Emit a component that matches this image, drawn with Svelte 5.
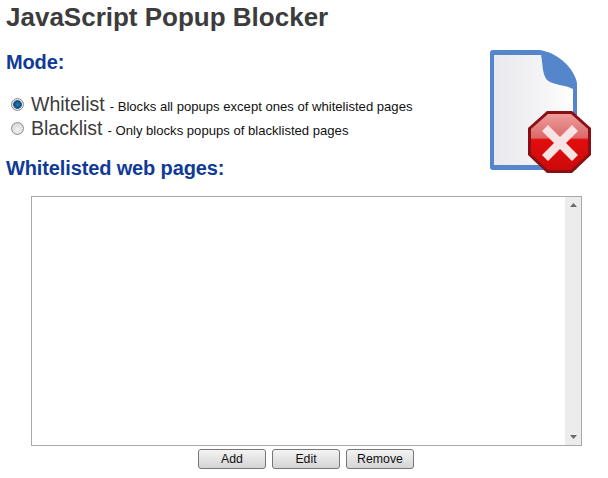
<script>
  let mode = $state("whitelist");
</script>

<div class="page">
  <h1>JavaScript Popup Blocker</h1>

  <svg class="logo" width="106" height="128" viewBox="0 0 106 128">
    <defs>
      <linearGradient id="sheet" x1="0" x2="1" y1="0" y2="0">
        <stop offset="0" stop-color="#e9e9ee" />
        <stop offset="0.6" stop-color="#f4f4f6" />
        <stop offset="1" stop-color="#ffffff" />
      </linearGradient>
      <linearGradient id="stop-red" x1="0" x2="0" y1="0" y2="1">
        <stop offset="0" stop-color="#ee9c9c" />
        <stop offset="0.42" stop-color="#dc6a6a" />
        <stop offset="0.46" stop-color="#e20d0d" />
        <stop offset="1" stop-color="#cc0a0a" />
      </linearGradient>
    </defs>
    <path d="M3 0H50C68 3 84 18 87 33V117Q87 120 84 120H3Q0 120 0 117V3Q0 0 3 0Z" fill="#5585cb" />
    <path d="M4 5H51C53 14 52 24 57 30C63 35 76 35 83 39V115H4Z" fill="url(#sheet)" />
    <path d="M57 61H82L101 78V105L82 123H57L38 105V78Z" fill="#8a0f14" />
    <path d="M58 64H81L98 79V104L81 120H58L41 104V79Z" fill="url(#stop-red)" />
    <path d="M58 75L70 87L82 75L88 81L76 93L88 105L82 111L70 99L58 111L52 105L64 93L52 81Z" fill="#f8e4e4" />
  </svg>

  <h2>Mode:</h2>

  <div class="modes">
    <label class="mode">
      <input type="radio" name="mode" value="whitelist" bind:group={mode} />
      <span class="name">Whitelist</span>
      <span class="hint">- Blocks all popups except ones of whitelisted pages</span>
    </label>
    <label class="mode">
      <input type="radio" name="mode" value="blacklist" bind:group={mode} />
      <span class="name">Blacklist</span>
      <span class="hint">- Only blocks popups of blacklisted pages</span>
    </label>
  </div>

  <h2 class="pages">Whitelisted web pages:</h2>

  <div class="list">
    <div class="scrollbar">
      <svg width="7" height="4" viewBox="0 0 7 4"><path d="M3.5 0L7 4H0Z" fill="#6a6a6a" /></svg>
      <svg width="7" height="4" viewBox="0 0 7 4"><path d="M0 0H7L3.5 4Z" fill="#6a6a6a" /></svg>
    </div>
  </div>

  <div class="buttons">
    <button>Add</button>
    <button>Edit</button>
    <button>Remove</button>
  </div>
</div>

<style>
  :global(body) {
    background: white;
    font-family: "Liberation Sans", Arial, sans-serif;
  }

  .page {
    position: relative;
    width: 608px;
    height: 478px;
    padding: 2px 6px 0;
    box-sizing: border-box;
    overflow: hidden;
  }

  h1 {
    margin: 0;
    font-size: 26px;
    line-height: 30px;
    font-weight: bold;
    color: #3c3c3c;
  }

  h2 {
    margin: 16px 0 0;
    font-size: 20px;
    line-height: 28px;
    font-weight: bold;
    color: #0f3a96;
    letter-spacing: -0.13px;
  }

  .logo {
    position: absolute;
    left: 490px;
    top: 50px;
  }

  .modes {
    margin-top: 16px;
    padding-left: 4px;
  }

  .mode {
    display: flex;
    align-items: baseline;
    height: 24px;
    line-height: 24px;
  }

  input {
    appearance: none;
    width: 13px;
    height: 13px;
    margin: 0 7px 0 1px;
    align-self: center;
    border: 1px solid #8e8e8e;
    border-radius: 50%;
    box-sizing: border-box;
    background: radial-gradient(circle at 50% 60%, #f2f2f2, #cfcfcf);
  }

  input:checked {
    background: radial-gradient(circle, #1c86bd 0, #0a4f8c 42%, #3f5f7a 52%, #e6e6e6 60%, #d8d8d8 100%);
  }

  .name {
    font-size: 19.5px;
    color: #3c3c3c;
  }

  .hint {
    margin-left: 5px;
    font-size: 13.1px;
    color: #111;
  }

  .pages {
    margin-top: 14px;
  }

  .list {
    display: flex;
    justify-content: flex-end;
    width: 551px;
    height: 250px;
    margin: 14px 0 0 25px;
    border: 1px solid #a9a9a9;
    box-sizing: border-box;
  }

  .scrollbar {
    display: flex;
    flex-direction: column;
    justify-content: space-between;
    align-items: center;
    width: 16px;
    padding: 6px 0;
    box-sizing: border-box;
    background: #ececec;
  }

  .scrollbar svg {
    display: block;
  }

  .buttons {
    display: flex;
    justify-content: center;
    gap: 6px;
    width: 600px;
    margin-top: 3px;
  }

  button {
    width: 68px;
    height: 20px;
    padding: 0;
    border: 1px solid #777;
    border-radius: 3px;
    background: linear-gradient(#f4f4f4, #d4d4d4);
    font-family: "Liberation Sans", Arial, sans-serif;
    font-size: 12.3px;
    color: #111;
  }
</style>
